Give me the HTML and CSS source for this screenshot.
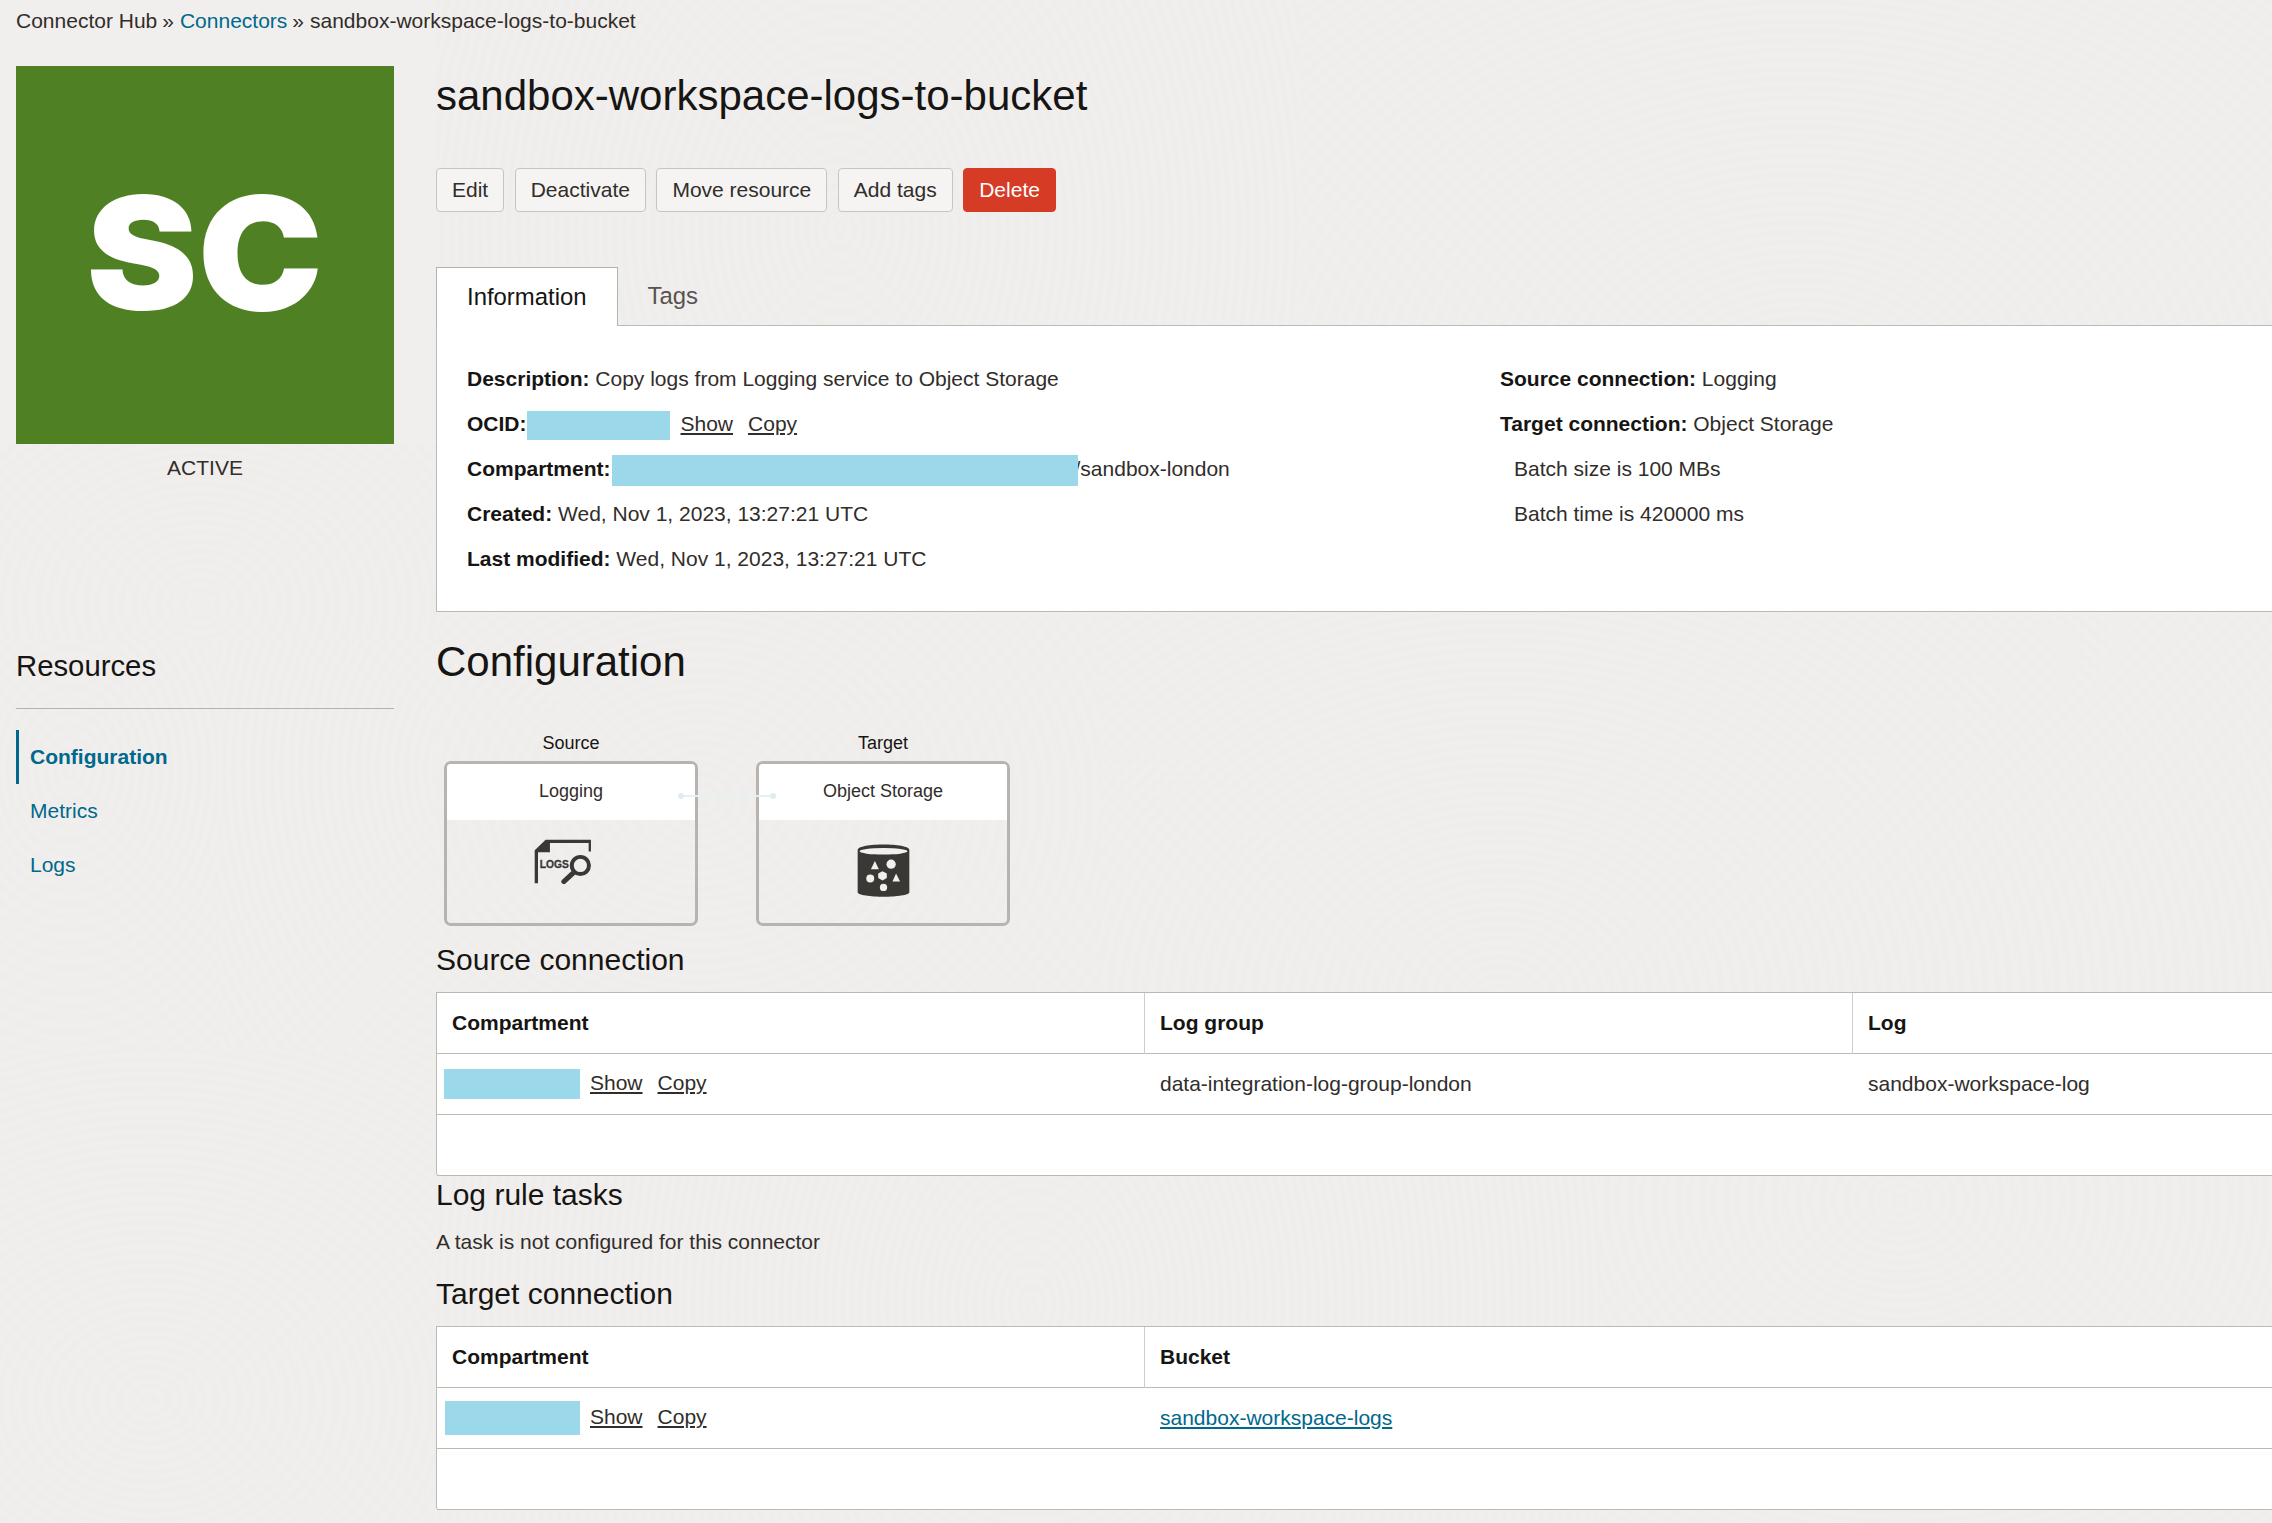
FILE: index.html
```
<!DOCTYPE html>
<html lang="en">
<head>
<meta charset="utf-8">
<title>sandbox-workspace-logs-to-bucket</title>
<link rel="stylesheet" href="styles.css">
</head>
<body>
<nav class="crumbs"><span>Connector Hub</span><span class="sep">»</span><a class="crumb-link" href="#">Connectors</a><span class="sep">»</span><span class="crumb-last">sandbox-workspace-logs-to-bucket</span></nav>
<div class="page">
  <aside class="side">
    <div class="logo"><span class="logo-text">SC</span></div>
    <div class="state">ACTIVE</div>
    <h2 class="res-title">Resources</h2>
    <ul class="res-nav">
      <li class="res-item active"><a href="#">Configuration</a></li>
      <li class="res-item"><a href="#">Metrics</a></li>
      <li class="res-item"><a href="#">Logs</a></li>
    </ul>
  </aside>
  <main class="main">
    <h1 class="title">sandbox-workspace-logs-to-bucket</h1>
    <div class="actions">
      <button class="btn">Edit</button>
      <button class="btn">Deactivate</button>
      <button class="btn">Move resource</button>
      <button class="btn">Add tags</button>
      <button class="btn danger">Delete</button>
    </div>
    <div class="tabs">
      <div class="tab current">Information</div>
      <div class="tab">Tags</div>
    </div>
    <section class="panel">
      <div class="info-col">
        <div class="row"><b>Description:</b> Copy logs from Logging service to Object Storage</div>
        <div class="row"><b>OCID:</b><span class="mask m-ocid"></span><a class="act first" href="#">Show</a><a class="act" href="#">Copy</a></div>
        <div class="row"><b>Compartment:</b><span class="mask m-comp"></span>/sandbox-london</div>
        <div class="row"><b>Created:</b> Wed, Nov 1, 2023, 13:27:21 UTC</div>
        <div class="row"><b>Last modified:</b> Wed, Nov 1, 2023, 13:27:21 UTC</div>
      </div>
      <div class="info-col">
        <div class="row"><b>Source connection:</b> Logging</div>
        <div class="row"><b>Target connection:</b> Object Storage</div>
        <div class="row indent">Batch size is 100 MBs</div>
        <div class="row indent">Batch time is 420000 ms</div>
      </div>
    </section>
    <h2 class="section-title">Configuration</h2>
    <div class="diagram">
      <div class="node">
        <div class="node-label">Source</div>
        <div class="node-box">
          <div class="node-head">Logging</div>
          <div class="node-body logs-body">
            <svg class="icon-logs" viewBox="100 58 175 136" aria-hidden="true">
              <path class="ink" d="M102 192V92L135 60H272V96H265V70H148V98H112V192Z"/>
              <text class="logs-word" x="117" y="146" textLength="88" lengthAdjust="spacingAndGlyphs">LOGS</text>
              <circle class="lens" cx="240" cy="138" r="26"/>
              <path class="handle" d="M217 162L190 187"/>
            </svg>
          </div>
        </div>
      </div>
      <div class="node">
        <div class="node-label">Target</div>
        <div class="node-box">
          <div class="node-head">Object Storage</div>
          <div class="node-body bucket-body">
            <svg class="icon-bucket" viewBox="80 74 160 160" aria-hidden="true">
              <path class="ink" d="M82 92C82 70 238 70 238 92V220C238 238 82 238 82 220Z"/>
              <g class="paper">
                <ellipse cx="160" cy="96" rx="72" ry="10"/>
                <path d="M134 125L146 150H122Z"/>
                <circle cx="183" cy="135" r="14"/>
                <circle cx="120" cy="178" r="12"/>
                <path d="M157 156L170 163V177L157 184L144 177V163Z"/>
                <path d="M198 163L210 187H187Z"/>
                <circle cx="160" cy="205" r="11"/>
              </g>
            </svg>
          </div>
        </div>
      </div>
      <svg class="link" width="104" height="10" viewBox="0 0 104 10" aria-hidden="true">
        <path class="link-line" d="M6 5H98"/>
        <circle class="link-dot" cx="6" cy="5" r="3"/>
        <circle class="link-dot" cx="98" cy="5" r="3"/>
      </svg>
    </div>
    <h3 class="sub-title first-sub">Source connection</h3>
    <table class="grid">
      <thead><tr><th>Compartment</th><th>Log group</th><th>Log</th></tr></thead>
      <tbody>
        <tr><td class="c-comp"><span class="mask m-cell"></span><a class="act first" href="#">Show</a><a class="act" href="#">Copy</a></td><td>data-integration-log-group-london</td><td>sandbox-workspace-log</td></tr>
        <tr><td></td><td></td><td></td></tr>
      </tbody>
    </table>
    <h3 class="sub-title tasks-title">Log rule tasks</h3>
    <p class="note">A task is not configured for this connector</p>
    <h3 class="sub-title target-title">Target connection</h3>
    <table class="grid two">
      <thead><tr><th>Compartment</th><th>Bucket</th></tr></thead>
      <tbody>
        <tr><td class="c-comp"><span class="mask m-cell tall"></span><a class="act first" href="#">Show</a><a class="act" href="#">Copy</a></td><td><a class="bucket" href="#">sandbox-workspace-logs</a></td></tr>
        <tr><td></td><td></td></tr>
      </tbody>
    </table>
  </main>
</div>
</body>
</html>
```
FILE: styles.css
```
* { box-sizing: border-box; }
html, body { height: 1523px; overflow: hidden; }
body {
  --r: rgba(110,100,90,.016);
  margin: 0;
  color: #161513;
  font-family: "Liberation Sans", Arial, sans-serif;
  font-size: 21px;
  background-color: #f1efed;
  background-image:
    repeating-radial-gradient(ellipse 120px 160px at 404px 230px, transparent 0, var(--r) 4%, transparent 8%),
    repeating-radial-gradient(ellipse 160px 120px at 500px 400px, transparent 0, var(--r) 4%, transparent 8%),
    repeating-radial-gradient(ellipse 150px 120px at 200px 160px, transparent 0, var(--r) 4%, transparent 8%),
    repeating-radial-gradient(ellipse 120px 160px at 70px 130px, transparent 0, var(--r) 4%, transparent 8%),
    repeating-radial-gradient(ellipse 120px 160px at 270px 130px, transparent 0, var(--r) 4%, transparent 8%),
    repeating-radial-gradient(ellipse 150px 120px at 150px 350px, transparent 0, var(--r) 4%, transparent 8%),
    repeating-radial-gradient(ellipse 160px 130px at 264px 189px, transparent 0, var(--r) 4%, transparent 8%),
    repeating-radial-gradient(ellipse 150px 120px at 400px 389px, transparent 0, var(--r) 4%, transparent 8%),
    repeating-radial-gradient(ellipse 110px 150px at 596px 130px, transparent 0, var(--r) 4%, transparent 8%),
    repeating-radial-gradient(ellipse 150px 120px at 300px 25px, transparent 0, var(--r) 4%, transparent 8%);
  background-size: 864px 325px, 972px 325px, 436px 196px, 218px 410px, 218px 410px, 436px 473px, 664px 381px, 1172px 381px, 1164px 348px, 672px 348px;
  background-position: 436px 0, 1300px 0, 0 444px, 0 640px, 218px 640px, 0 1050px, 436px 611px, 1100px 611px, 436px 1175px, 1600px 1175px;
  background-repeat: no-repeat;
}
a { text-decoration: none; color: inherit; }
h1, h2, h3, p, ul { margin: 0; padding: 0; font-weight: 400; }
ul { list-style: none; }

.crumbs { display: flex; height: 36px; padding: 6px 16px 0; line-height: 30px; color: #312d2a; }
.crumb-link { color: #00688c; }
.sep { margin: 0 6px 0 5px; }
.crumb-last { color: #312d2a; }

.page { display: flex; margin-top: 30px; padding-left: 16px; }
.side { flex: none; width: 378px; }
.logo { display: flex; align-items: center; justify-content: center; height: 378px; padding-bottom: 5px; background: #508024; }
.logo-text { color: #fff; font-family: Inter, "Liberation Sans", Arial, sans-serif; font-size: 158px; line-height: 1; font-weight: 900; transform: scaleX(1.06); }
.state { margin-top: 9px; line-height: 30px; text-align: center; color: #312d2a; }
.res-title { margin-top: 163px; height: 63px; padding-bottom: 22px; border-bottom: 1px solid #b5b2ae; font-size: 29.3px; line-height: 40px; }
.res-nav { margin-top: 21px; }
.res-item { height: 54px; padding-left: 11px; border-left: 3px solid transparent; line-height: 54px; color: #00688c; }
.res-item.active { border-left-color: #00688c; font-weight: 700; }

.main { flex: none; width: 1836px; margin-left: 42px; }
.title { padding-top: 1px; font-size: 42px; line-height: 58px; height: 58px; }
.actions { display: flex; gap: 10.5px; margin-top: 44px; }
.btn { height: 44px; padding: 0 15px; border: 1px solid #c8c5c1; border-radius: 4px; background: #f5f4f2; color: #312d2a; font: inherit; }
.btn.danger { border-color: #d63b25; background: #d63b25; color: #fff; }

.tabs { display: flex; height: 58px; margin-top: 55px; }
.tab { padding: 0 30px; line-height: 58px; font-size: 23.9px; color: #57534f; }
.tab.current { position: relative; z-index: 1; height: 59px; border: 1px solid #b5b2ae; border-bottom: 0; background: #fff; color: #161513; }
.panel { display: grid; grid-template-columns: 1033px 1fr; height: 287px; padding: 30px 0 0 30px; border: 1px solid #bdbab6; border-right: 0; background: #fff; }
.row { height: 45px; line-height: 45px; white-space: nowrap; color: #312d2a; }
.row b { color: #161513; }
.indent { padding-left: 14px; }
.mask { display: inline-block; vertical-align: middle; background: #9bd8ea; }
.m-ocid { width: 143px; height: 29px; margin-right: 1px; }
.m-comp { position: relative; width: 466px; height: 31px; margin: 0 -3px 0 1px; }
.m-cell { width: 136px; height: 30px; }
.m-cell.tall { height: 34px; width: 135px; margin-left: 1px; }
.act { margin-left: 15px; text-decoration: underline; color: #312d2a; }
.act.first { margin-left: 10px; }

.section-title { margin-top: 25px; font-size: 42px; line-height: 50px; }
.diagram { position: relative; display: flex; gap: 58px; margin: 44px 0 0 8px; }
.node { width: 254px; }
.node-label { height: 30px; line-height: 24px; text-align: center; font-size: 18px; }
.node-box { height: 165px; overflow: hidden; border: 3px solid #b8b3ae; border-radius: 7px; }
.node-head { height: 56px; background: #fff; text-align: center; font-size: 18px; line-height: 54px; color: #312d2a; }
.node-body { display: flex; justify-content: center; }
.logs-body { padding: 19px 16px 0 0; }
.bucket-body { padding-top: 24px; }
.icon-logs { width: 58px; height: 45px; }
.icon-bucket { width: 53px; height: 53px; }
.ink { fill: #3a3835; }
.paper { fill: #f1f0ee; }
.logs-word { font: 700 35px "Liberation Sans", Arial, sans-serif; fill: #3a3835; stroke: #3a3835; stroke-width: 1; }
.lens { fill: none; stroke: #3a3835; stroke-width: 12; }
.handle { fill: none; stroke: #3a3835; stroke-width: 15; stroke-linecap: round; }
.link { position: absolute; left: 231px; top: 60px; }
.link-line { stroke: #e6f0f3; stroke-width: 2; }
.link-dot { fill: #dfecf0; }

.sub-title { font-size: 30px; line-height: 36px; }
.first-sub { margin-top: 16px; }
.tasks-title { margin-top: 1px; }
.target-title { margin-top: 19px; }
.note { margin-top: 14px; line-height: 30px; color: #312d2a; }
.grid { width: 100%; margin-top: 14px; table-layout: fixed; border-collapse: separate; border-spacing: 0; background: #fff; border-top: 1px solid #bdbab6; border-left: 1px solid #bdbab6; border-bottom-left-radius: 4px; }
.grid th, .grid td { height: 61px; padding: 0 15px; border-bottom: 1px solid #bdbab6; text-align: left; white-space: nowrap; color: #312d2a; }
.grid th { border-right: 1px solid #d0cdc9; font-weight: 700; color: #161513; }
.grid th:last-child { border-right: 0; }
.grid th:nth-child(1), .grid th:nth-child(2) { width: 708px; }
.grid td.c-comp { padding-left: 7px; }
.two th:nth-child(2) { width: auto; }
.bucket { color: #00688c; text-decoration: underline; }
```
